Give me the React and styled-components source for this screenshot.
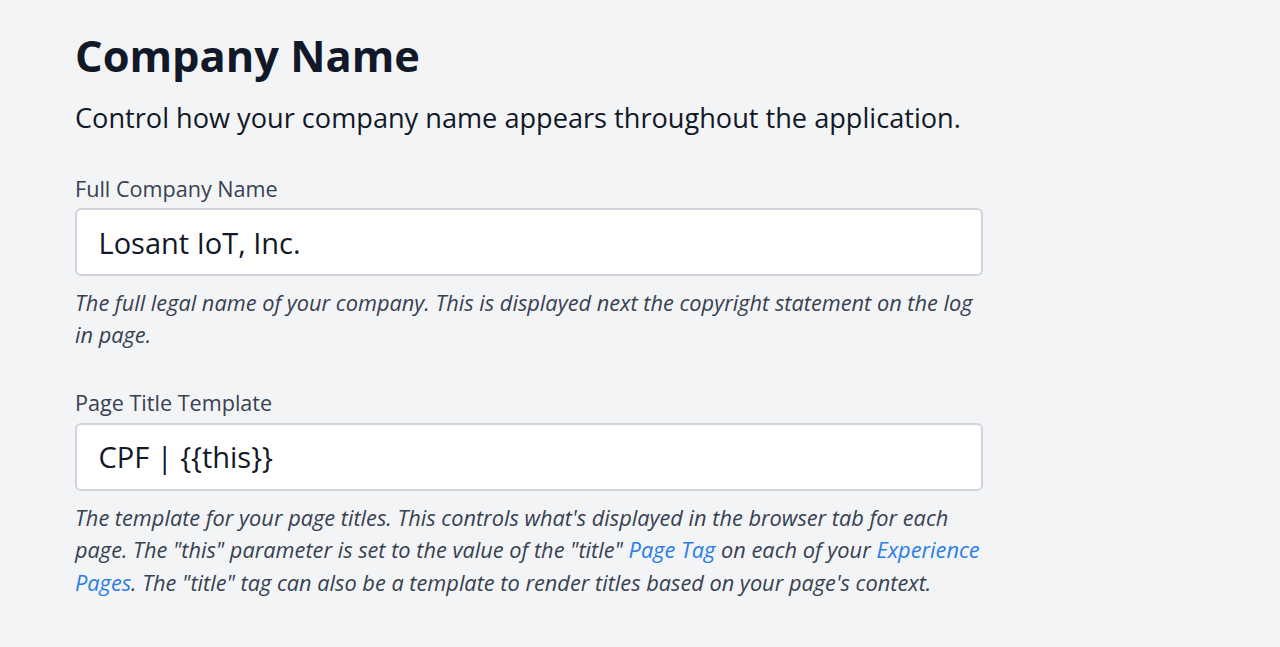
import React from "react";
import styled, { createGlobalStyle } from "styled-components";

const Global = createGlobalStyle`
  html, body { margin: 0; padding: 0; background: #f3f4f6; }
  body { font-family: "Open Sans", "Noto Sans", sans-serif; color: #111827; }
  * { box-sizing: border-box; }
`;

const Page = styled.div`
  min-height: 647px;
  background: #f3f4f6;
  padding: 26px 0 0 75px;
`;

const Section = styled.section`
  width: 908px;
  display: flex;
  flex-direction: column;
`;

const Title = styled.h1`
  margin: 0;
  font-size: 43.4px;
  line-height: 60px;
  font-weight: 700;
  color: #111827;
`;

const Subtitle = styled.p`
  margin: 13.5px 0 0;
  font-size: 27.15px;
  line-height: 36px;
  color: #111827;
`;

const Field = styled.div`
  display: flex;
  flex-direction: column;
  margin-top: ${(p) => p.$top}px;
`;

const Label = styled.label`
  font-size: 21.6px;
  line-height: 30px;
  color: #374151;
  margin-bottom: 4.5px;
`;

const Input = styled.input`
  width: 100%;
  height: 68px;
  padding: 0 21.5px;
  border: 2px solid #d1d5db;
  border-radius: 6px;
  background: #fff;
  font-family: inherit;
  font-size: 29px;
  color: #111827;
  outline: none;
`;

const Help = styled.p`
  margin: 11px 0 0;
  font-size: 21.75px;
  line-height: 32.4px;
  font-style: italic;
  color: #374151;
`;

const Link = styled.a`
  color: #2b7de9;
  text-decoration: none;
`;

export default function App() {
  return (
    <>
      <Global />
      <Page>
        <Section>
          <Title>Company Name</Title>
          <Subtitle>Control how your company name appears throughout the application.</Subtitle>
          <Field $top={38}>
            <Label>Full Company Name</Label>
            <Input defaultValue="Losant IoT, Inc." />
            <Help>
              The full legal name of your company. This is displayed next the copyright statement on the log in page.
            </Help>
          </Field>
          <Field $top={36.5}>
            <Label>Page Title Template</Label>
            <Input defaultValue="CPF | {{this}}" />
            <Help>
              The template for your page titles. This controls what's displayed in the browser tab for each page. The "this" parameter is set to the value of the "title" <Link>Page Tag</Link> on each of your <Link>Experience Pages</Link>. The "title" tag can also be a template to render titles based on your page's context.
            </Help>
          </Field>
        </Section>
      </Page>
    </>
  );
}
